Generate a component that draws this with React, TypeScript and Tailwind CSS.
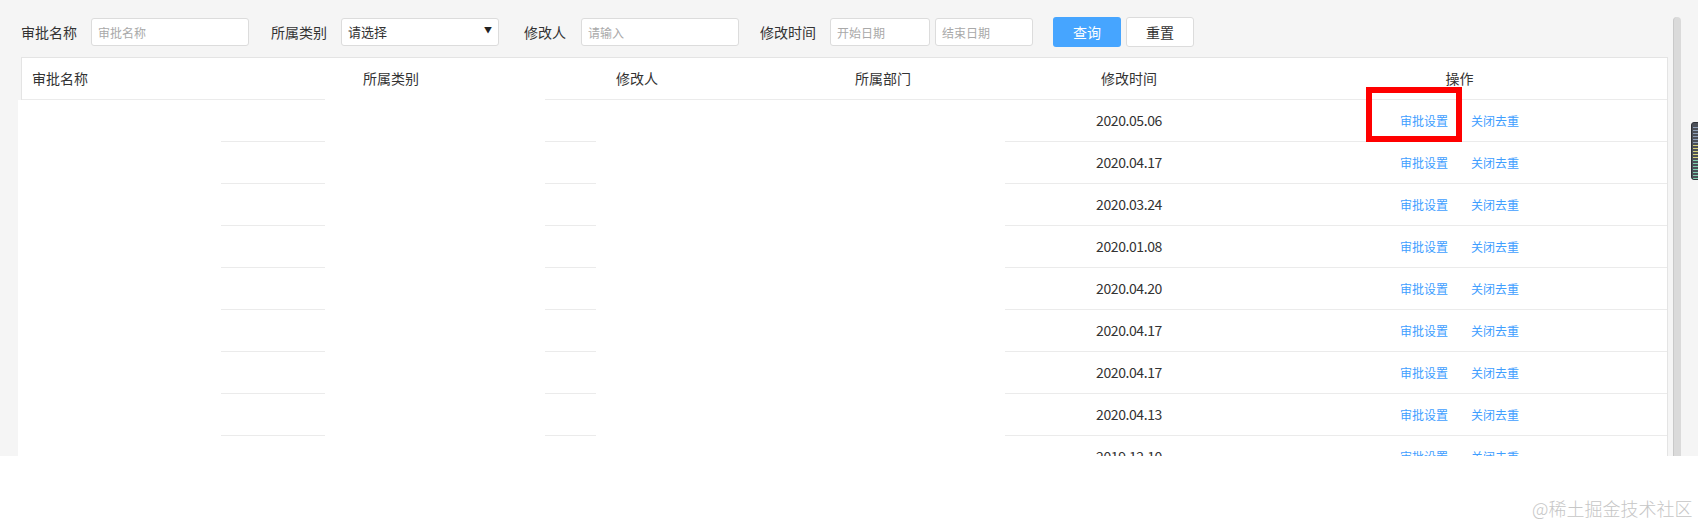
const dates = [
  "2020.05.06",
  "2020.04.17",
  "2020.03.24",
  "2020.01.08",
  "2020.04.20",
  "2020.04.17",
  "2020.04.17",
  "2020.04.13",
  "2019.12.10",
];

function Label({ children, className = "" }: { children: React.ReactNode; className?: string }) {
  return <span className={`h-7 text-[14px] leading-7 text-[#333] whitespace-nowrap ${className}`}>{children}</span>;
}

function TextInput({ placeholder, className = "" }: { placeholder: string; className?: string }) {
  return (
    <input
      placeholder={placeholder}
      className={`h-7 rounded-[3px] border border-[#dcdcdc] bg-white px-[6px] text-[12px] text-[#333] outline-none placeholder:text-[#a9a9a9] ${className}`}
    />
  );
}

export default function App() {
  return (
    <div className="relative h-[525px] w-[1698px] overflow-hidden bg-white font-['Microsoft_YaHei','Noto_Sans_CJK_SC',sans-serif] text-[#333]">
      <div className="relative flex h-[456px] overflow-hidden bg-[#f5f5f5]">
        <div className="w-[1673px] shrink-0">
          {/* search bar */}
          <div className="flex h-[57px] items-start pl-[21px] pt-[18px]">
            <Label>审批名称</Label>
            <TextInput placeholder="审批名称" className="ml-[14px] w-[158px]" />
            <Label className="ml-[22px]">所属类别</Label>
            <div className="relative ml-[14px] flex h-7 w-[158px] items-center rounded-[3px] border border-[#dcdcdc] bg-white pl-[6px] text-[13px] text-[#333]">
              请选择
              <span className="absolute right-[6px] top-[7px] text-[8px] leading-none text-[#222]">▼</span>
            </div>
            <Label className="ml-[25px]">修改人</Label>
            <TextInput placeholder="请输入" className="ml-[15px] w-[158px]" />
            <Label className="ml-[21px]">修改时间</Label>
            <TextInput placeholder="开始日期" className="ml-[14px] w-[100px]" />
            <TextInput placeholder="结束日期" className="ml-[5px] w-[98px]" />
            <button className="ml-[20px] h-[30px] -mt-px w-[68px] rounded-[3px] bg-[#46a5ff] text-[14px] text-white">查询</button>
            <button className="ml-[5px] h-[30px] -mt-px w-[68px] rounded-[3px] border border-[#dcdcdc] bg-white text-[14px] text-[#333]">重置</button>
          </div>

          {/* table */}
          <div className="ml-[21px] w-[1647px] border-x border-t border-[#e4e4e4] bg-white">
            <div className="grid h-[42px] grid-cols-[246px_246px_246px_246px_246px_1fr] items-center border-b border-[#ebebeb] text-[14px] text-[#333]">
              <div className="pl-[10px]">审批名称</div>
              <div className="text-center">所属类别</div>
              <div className="text-center">修改人</div>
              <div className="text-center">所属部门</div>
              <div className="text-center">修改时间</div>
              <div className="text-center">操作</div>
            </div>
            {dates.map((d, i) => (
              <div
                key={i}
                className="grid h-[42px] grid-cols-[246px_246px_246px_246px_246px_1fr] items-center border-b border-[#ebebeb]"
              >
                <div />
                <div />
                <div />
                <div />
                <div className="text-center text-[14px] tracking-[-0.4px] text-[#333]">{d}</div>
                <div className="flex justify-center gap-[23px] text-[12px] text-[#409eff]">
                  <span>审批设置</span>
                  <span>关闭去重</span>
                </div>
              </div>
            ))}
          </div>
        </div>

        {/* scrollbar */}
        <div className="mt-[17px] h-[460px] w-2 shrink-0 rounded-t-full border-l border-[#c9c9c9] bg-[#dadada]" />

        {/* erased cells */}
        <div className="absolute left-[18px] top-[100px] h-[356px] w-[203px] bg-white" />
        <div className="absolute left-[325px] top-[93px] h-[363px] w-[220px] bg-white" />
        <div className="absolute left-[596px] top-[100px] h-[356px] w-[409px] bg-white" />

        {/* highlight box */}
        <div className="absolute left-[1366px] top-[87px] h-[55px] w-[96px] border-[6px] border-[#ff0000]" />

        {/* side widget */}
        <div className="absolute left-[1691px] top-[122px] h-[58px] w-[10px] overflow-hidden rounded-l-[3px] border border-[#2e3036] bg-[#4b4f57]">
          <svg width="10" height="58" viewBox="0 0 10 58">
            {Array.from({ length: 18 }).map((_, i) => (
              <rect
                key={i}
                x="1"
                y={4 + i * 3}
                width="8"
                height="1"
                fill={i < 6 ? "#8fa0b8" : i < 11 ? "#d8d27a" : "#7fd0b0"}
              />
            ))}
          </svg>
        </div>
      </div>

      <div className="absolute left-[1532px] top-[496px] whitespace-nowrap text-[18px] font-light leading-6 text-[#c6c6c6]">
        @稀土掘金技术社区
      </div>
    </div>
  );
}
